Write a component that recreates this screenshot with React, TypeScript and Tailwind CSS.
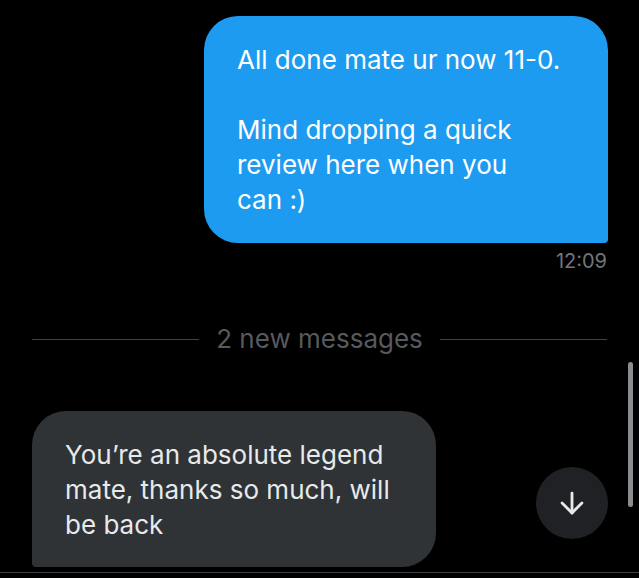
import { ArrowDown } from "lucide-react";

const font = { fontFamily: "Inter, 'Noto Sans', sans-serif" };

export default function App() {
  return (
    <div
      className="relative flex h-[578px] w-[639px] flex-col overflow-hidden bg-black"
      style={font}
    >
      <div className="ml-auto mr-[31px] mt-[16px] w-[404px] rounded-[34px] rounded-br-[4px] bg-[#1d9bf0] px-[33px] pb-[26px] pt-[26px] text-[26px] leading-[35px] text-white">
        <p>All done mate ur now 11-0.</p>
        <p className="mt-[35px]">
          Mind dropping a quick
          <br />
          review here when you
          <br />
          can :)
        </p>
      </div>
      <div className="mr-[32px] mt-[6px] text-right text-[20px] leading-[24px] text-[#71767b]">
        12:09
      </div>

      <div className="mx-[32px] mt-[50px] flex items-center gap-[17px]">
        <div className="h-px flex-1 bg-[#3e4245]" />
        <span className="text-[26px] leading-[32px] text-[#565a5e]">2 new messages</span>
        <div className="h-px flex-1 bg-[#3e4245]" />
      </div>

      <div className="ml-[32px] mt-[56px] w-[404px] rounded-[34px] rounded-bl-[4px] bg-[#2f3336] px-[33px] pb-[25px] pt-[26px] text-[26px] leading-[35px] text-[#e7e9ea]">
        You’re an absolute legend
        <br />
        mate, thanks so much, will
        <br />
        be back
      </div>

      <div className="mt-auto h-px w-full bg-[#3e4245]" />
      <div className="h-[5px]" />

      <div className="absolute left-[536px] top-[467px] flex h-[72px] w-[72px] items-center justify-center rounded-full bg-[#1f2124]">
        <ArrowDown className="h-[34px] w-[34px] text-[#e7e9ea]" strokeWidth={2} />
      </div>
      <div className="absolute left-[628px] top-[362px] h-[145px] w-[5px] rounded-full bg-[#8a8d90]" />
    </div>
  );
}
